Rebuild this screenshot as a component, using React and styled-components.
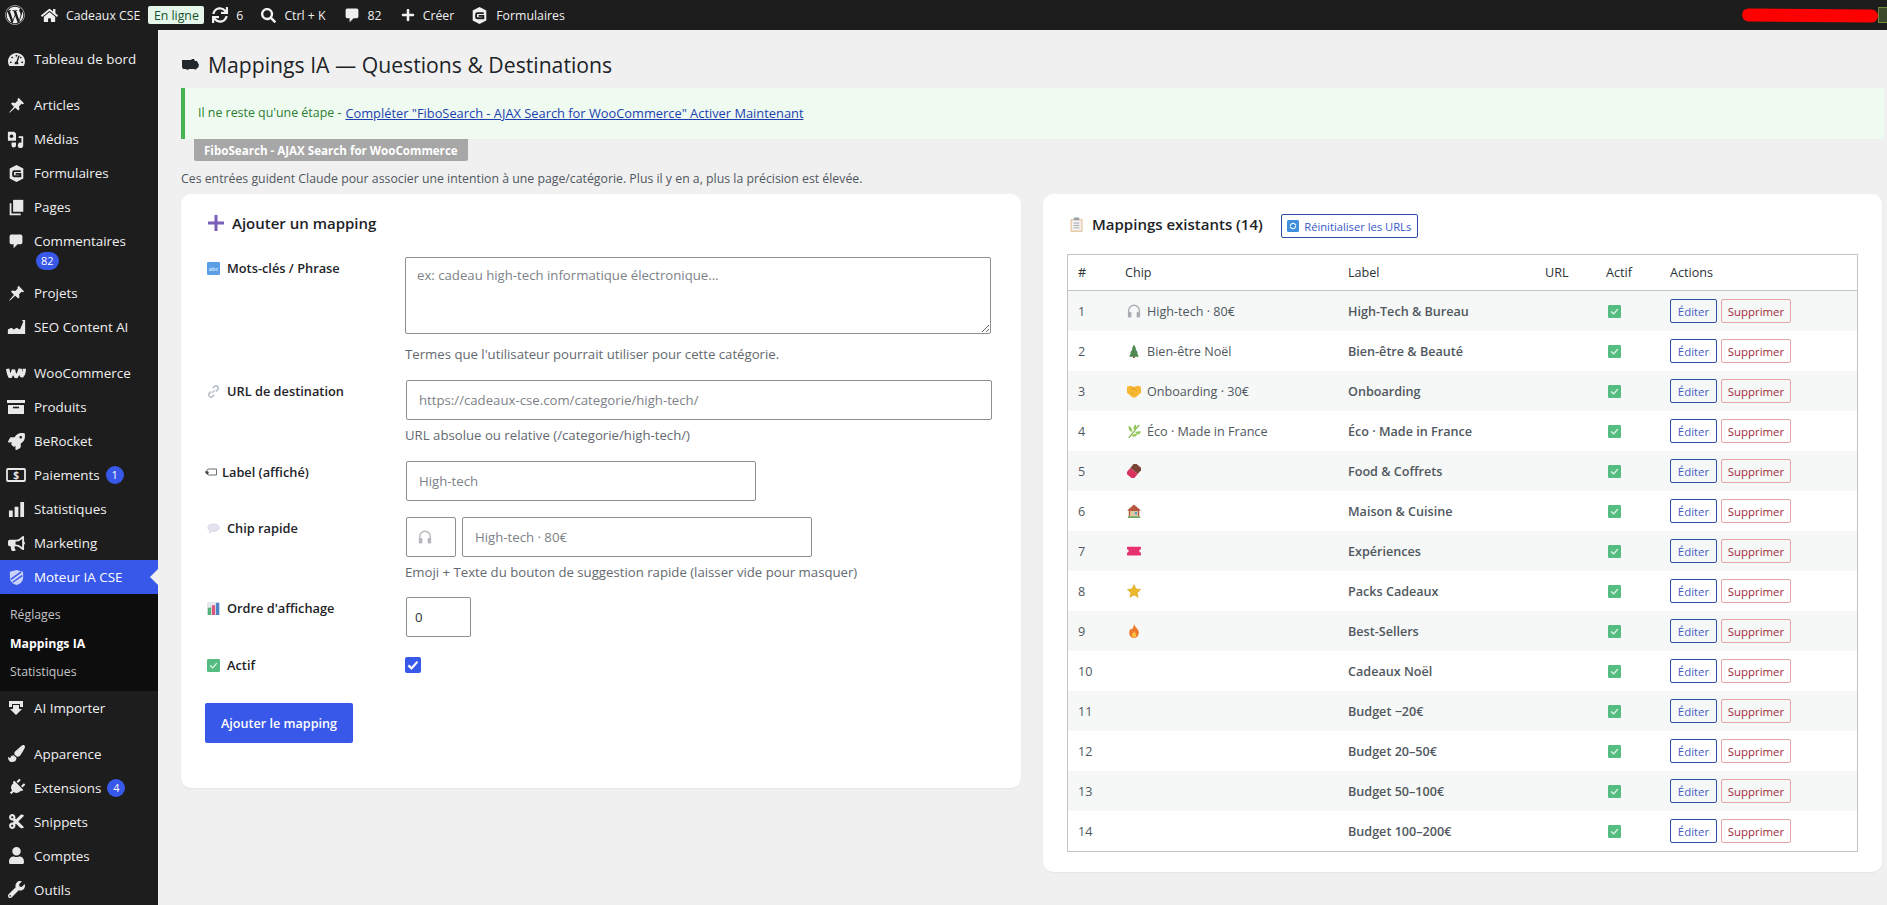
import React from "react";
import styled, { createGlobalStyle } from "styled-components";
import {
  FaWordpress, FaHome, FaSync, FaSearch, FaPlus, FaTachometerAlt, FaRocket,
  FaBullhorn, FaPaintBrush, FaPlug, FaCut, FaUser, FaWrench,
} from "react-icons/fa";

const Global = createGlobalStyle`
  html, body { margin: 0; padding: 0; height: 905px; overflow: hidden; background: #f0f0f0; }
  body { font-family: "Open Sans", "Noto Sans", "Liberation Sans", sans-serif; font-size: 13px; color: #3c434a; }
  * { box-sizing: border-box; }
`;

const AdminBar = styled.header`
  display: flex; align-items: center; height: 30px; background: #1d1d1d; color: #f0f0f1;
  font-size: 12.3px; padding-left: 5px;
`;
const BarItem = styled.div`
  display: flex; align-items: center; gap: ${p => p.$gap ?? 8}px; margin-left: ${p => p.$ml ?? 18}px; white-space: nowrap;
`;
const LogoItem = styled(BarItem)`font-size: 20px;`;
const OnlineBadge = styled.span`
  display: inline-flex; align-items: center; justify-content: center; height: 18px; width: 56px;
  background: #e6f6ea; color: #14532d; border-radius: 2px; font-size: 12.3px;
`;
const Redaction = styled.div`
  margin-left: auto; width: 136px; height: 13px; background: #ff0000; border-radius: 7px; transform: rotate(.5deg);
`;
const Corner = styled.div`
  width: 9px; height: 16px; background: #3c4a2c; border: 1px solid #6b8a3a; border-right: 0;
`;

const Shell = styled.div`display: flex; align-items: flex-start; height: 875px;`;
const Sidebar = styled.nav`
  width: 158px; flex: none; height: 875px; background: #1d1d1d; padding-top: 12px; color: #f0f0f1; font-size: 13.4px;
`;
const Item = styled.div`
  position: relative; display: flex; align-items: flex-start; min-height: 34px; padding: 8px 0 ${p => p.$stack ? 6 : 0}px;
  margin-top: ${p => p.$sep ? 12 : 0}px;
  background: ${p => p.$active ? "#3858e9" : "transparent"};
  color: ${p => p.$active ? "#fff" : "#f0f0f1"};
`;
const IconSlot = styled.span`
  width: 34px; flex: none; height: 18px; display: flex; align-items: center; justify-content: center; padding-right: 2px; color: #e8e8e8;
  font-size: 17px;
`;
const ItemBody = styled.div`
  display: flex; flex-direction: ${p => p.$stack ? "column" : "row"}; align-items: ${p => p.$stack ? "flex-start" : "center"}; gap: ${p => p.$stack ? 2 : 6}px; line-height: 18px;
`;
const Count = styled.span`
  display: inline-flex; align-items: center; justify-content: center; height: 18px; min-width: 18px; padding: 0 5px;
  background: #3858e9; color: #fff; border-radius: 9px; font-size: 11px; margin-left: ${p => p.$ml ?? 0}px;
`;
const Arrow = styled.span`
  position: absolute; right: 0; top: 9px; width: 0; height: 0;
  border: 8px solid transparent; border-right-color: #f0f0f0; border-left: 0;
`;
const Submenu = styled.div`
  background: #0d0d0d; padding: 12px 0 9px 10px; display: flex; flex-direction: column; gap: 10px; font-size: 12.3px; line-height: 18.5px; color: #c3c4c7;
`;
const SubLink = styled.div`
  font-weight: ${p => p.$on ? 700 : 400}; color: ${p => p.$on ? "#fff" : "#c3c4c7"};
`;

const Main = styled.main`flex: 1; min-width: 0; padding: 21px 5px 0 23px;`;
const Title = styled.h1`
  display: flex; align-items: center; gap: 8px; margin: 0; height: 26px; font-size: 21.2px; font-weight: 400; color: #1d2327; white-space: nowrap;
`;
const Notice = styled.div`
  margin: 11px -2px 0 0; height: 51px; display: flex; align-items: center; padding: 0 0 2px 13px;
  border-left: 4px solid #46b450; background: #effbf1; color: #2e7d32; font-size: 12.4px;
`;
const NoticeLink = styled.a`color: #1c3fb0; text-decoration: underline; margin-left: 4px; font-size: 12.85px;`;
const PluginTag = styled.div`
  display: inline-flex; align-items: center; height: 22px; width: 274px; margin-left: 13px; padding-left: 10px;
  background: #a7a7a7; color: #fff; font-weight: 700; font-size: 11.6px; border-radius: 0 0 2px 2px;
`;
const Intro = styled.p`margin: 9px 0 6px; line-height: 18px; font-size: 12.3px; color: #50575e;`;
const Columns = styled.div`display: grid; grid-template-columns: 840px 839px; gap: 22px;`;
const Card = styled.section`
  background: #fff; border-radius: 10px; box-shadow: 0 1px 2px rgba(0,0,0,.05);
  padding: ${p => p.$pad};
  height: ${p => p.$h}px;
`;
const CardTitle = styled.h2`
  display: flex; align-items: center; gap: 8px; margin: 0 0 24px 3px; height: 20px; font-size: 15px; font-weight: 600; color: #1d2327;
`;
const Row = styled.div`display: grid; grid-template-columns: 200px 1fr; margin-bottom: ${p => p.$mb ?? 17}px;`;
const FieldLabel = styled.label`
  display: flex; align-items: center; gap: 7px; height: 20px; margin-top: 1px; padding-left: 2px; font-weight: 600; font-size: 12.8px; color: #1d2327;
`;
const Tight = styled.span`display: inline-flex; margin: 0 -2px;`;
const Field = styled.div`display: flex; flex-direction: column; align-items: flex-start;`;
const FieldLine = styled.div`display: flex; gap: 6px; margin-left: 1px;`;
const Area = styled.textarea`
  width: 586px; height: 77px; padding: 8px 11px; resize: both; border: 1px solid #8c8f94; border-radius: 2px; font: inherit; font-size: 13.2px; display: block;
  &::placeholder { color: #7d8288; opacity: 1; }
`;
const Input = styled.input`
  width: ${p => p.$w}px; height: 40px; padding: 0 ${p => p.$pad ?? 12}px; border: 1px solid #8c8f94; border-radius: 2px; font: inherit; font-size: 13.2px; color: #2c3338; background: #fff;
  &::placeholder { color: #7d8288; opacity: 1; }
`;
const EmojiSlot = styled.div`
  width: 50px; height: 40px; border: 1px solid #8c8f94; border-radius: 2px; display: flex; align-items: center; padding-left: 11px;
`;
const Help = styled.p`
  margin: ${p => p.$mt ?? 6}px 0 0; line-height: 18px; font-size: 13.2px; color: #646970;
`;
const Check = styled.span`
  display: flex; align-items: center; justify-content: center; width: 16px; height: 16px; margin-top: 3px; background: #3858e9; border-radius: 2px;
`;
const Primary = styled.button`
  width: 148px; height: 40px; margin-top: 11px; background: #3858e9; color: #fff; border: 0; border-radius: 2px; font: inherit; font-weight: 600; font-size: 12.6px;
`;

const TableHead = styled.div`display: flex; align-items: center; height: 24px; margin-bottom: 16px; padding-left: 2px;`;
const TableTitle = styled.h2`
  display: flex; align-items: center; gap: 8px; margin: -4px 0 0; font-size: 15px; font-weight: 600; color: #1d2327; white-space: nowrap;
`;
const ResetBtn = styled.button`
  display: flex; align-items: center; justify-content: center; gap: 5px; width: 137px; height: 24px; margin-left: 18px; padding: 0;
  background: #fff; border: 1px solid #2f4fa8; border-radius: 2px; color: #3858c9; font: inherit; font-size: 11.2px; white-space: nowrap;
`;
const Table = styled.table`
  width: 791px; table-layout: fixed; border-collapse: separate; border-spacing: 0; border: 1px solid #c3c4c7; font-size: 12.6px;
`;
const Th = styled.th`
  width: ${p => p.$w}px; height: 36px; padding: 0 10px; text-align: left; font-weight: 400; color: #2c3338; border-bottom: 1px solid #c3c4c7;
`;
const Tr = styled.tr`background: ${p => p.$odd ? "#f6f7f7" : "#fff"};`;
const Td = styled.td`
  height: 40px; padding: 0 10px; color: #50575e; font-weight: ${p => p.$b ? 600 : 400}; white-space: nowrap;
`;
const ChipCell = styled.span`display: flex; align-items: center; gap: 6px; padding-left: 2px;`;
const ActionRow = styled.div`display: flex; gap: 4px;`;
const SmallBtn = styled.button`
  height: 24px; width: ${p => p.$w}px; padding: 0; background: #fff0; border: 1px solid ${p => p.$danger ? "#e8a5a5" : "#2f4fa8"}; border-radius: 2px;
  color: ${p => p.$danger ? "#a32b3a" : "#3f5cc0"}; font: inherit; font-size: 11.4px;
`;
const ActiveMark = styled.span`display: flex; padding-left: 2px;`;

/* small drawings */
const S = ({ size = 14, w, h, children, vb = "0 0 16 16" }) => (
  <svg width={w ?? size} height={h ?? size} viewBox={vb} fill="none" aria-hidden="true">{children}</svg>
);
const Bubble = () => <S size={16} vb="0 0 20 20"><path fill="currentColor" d="M4 2h12a2 2 0 0 1 2 2v8a2 2 0 0 1-2 2h-4l-5 5v-5H4a2 2 0 0 1-2-2V4a2 2 0 0 1 2-2z" /></S>;
const FormHex = () => <S size={17} vb="0 0 20 20"><path fill="currentColor" d="M10 0l8 4.200v11.600L10 20l-8-4.200V4.200z" /><path stroke="#1d1d1d" strokeWidth="2.200" d="M15 7.200H7.500Q6 7.200 6 9v3q0 1.200 1.500 1.200h7V10.400H9" /></S>;
const Media = () => <S size={18} vb="0 0 20 20"><path fill="currentColor" d="M1 2h7l2 2v8H1z" /><circle cx="5" cy="7" r="2" fill="#1d1d1d" /><path fill="currentColor" d="M13 7h5v10a3 3 0 1 1-2-2.700V9h-3zM5 14h5v3a2.500 2.500 0 1 1-5 0z" /></S>;
const Pages = () => <S size={17} vb="0 0 20 20"><path fill="currentColor" d="M6 1h12v14H6z" /><path stroke="currentColor" strokeWidth="2" d="M3 5v13h12" /></S>;
const Seo = () => <S w={19} h={16} vb="0 0 22 18"><path fill="currentColor" d="M1 17v-5l4-2 3 2 3-2 4 2 3-7 1-3 2 0v15zM17 1h4v4z" /></S>;
const Woo = () => <S w={20} h={12} vb="0 0 24 14"><path stroke="currentColor" strokeWidth="4" strokeLinejoin="bevel" d="M2 2q1 7 3 10 3-5 4-9 1 6 3 9 4-5 5-10 0 6 2 9 3-3 3-9" /></S>;
const Box = () => <S w={18} h={16} vb="0 0 18 16"><path fill="currentColor" d="M0 1h18v3H0zM1 6h16v9H1z" /><path stroke="#1d1d1d" strokeWidth="1.600" d="M6 8.500h6" /></S>;
const Dollar = () => <S w={20} h={14} vb="0 0 20 14"><rect x="1" y="1" width="18" height="12" rx="1" stroke="currentColor" strokeWidth="1.800" /><text x="10" y="11" textAnchor="middle" fontSize="10" fontWeight="700" fontFamily="Open Sans, sans-serif" fill="currentColor">$</text></S>;
const Bars = () => <S size={17} vb="0 0 18 18"><path fill="currentColor" d="M1 10h4v7H1zM7 6h4v11H7zM13 1h4v16h-4z" /></S>;
const Shield = () => <S size={17} vb="0 0 18 18"><path fill="#c9d2fb" d="M9 1l7 2v6c0 4-3 7-7 8-4-1-7-4-7-8V3z" /><path stroke="#3858e9" strokeWidth="1.500" d="M14 3L3 11M15 7L5 14" /></S>;
const Importer = () => <S size={16} vb="0 0 16 16"><path fill="currentColor" d="M1 1h14v6h-3V4H4v3H1zM5 5h6v4h3l-6 6-6-6h3z" /></S>;
const Pin = () => <S size={17} vb="0 0 20 20"><path fill="currentColor" d="M12.500 1l6.500 6.500-2 1-1-.5-3 3 .5 3.500-1.500 1.500-3.500-3.500L2 18.500 1.500 18l5.500-6.500L3.500 8l1.500-1.500 3.500.5 3-3-.5-1z" /></S>;
const Abc = () => <S size={13}><rect width="16" height="16" rx="1.500" fill="#5a9fe6" /><text x="8" y="10.500" textAnchor="middle" fontSize="7" fill="#dcecff" fontFamily="Open Sans, sans-serif">abc</text></S>;
const LinkE = () => <S size={13}><path stroke="#bcc3ca" strokeWidth="2" d="M6.500 9.500l3-3M5 8l-2 2a2.800 2.800 0 0 0 4 4l2-2M11 8l2-2a2.800 2.800 0 0 0-4-4L7 4" /></S>;
const TagE = () => <S w={12} h={8} vb="0 0 14 9"><path fill="#fff" stroke="#555" d="M3.500 1H13.500V8H3.500L.5 4.500z" /><circle cx="2.500" cy="5" r="1.800" fill="#444" /></S>;
const BubbleE = () => <S size={13}><path fill="#e6e2ee" stroke="#cfcadb" strokeWidth=".8" d="M8 2.500c4 0 7 1.700 7 4.500s-3 4.500-7 4.500c-.8 0-1.500 0-2.200-.2L3 13.500l.6-3C2 9.600 1 8.400 1 7c0-2.800 3-4.500 7-4.500z" /></S>;
const ChartE = () => <S size={13}><rect width="16" height="16" rx="1" fill="#e4e8ec" /><path fill="#54b07a" d="M1 7h4v9H1z" /><path fill="#d9557c" d="M6 4h4v12H6z" /><path fill="#4d84c8" d="M11 1h4v15h-4z" /></S>;
const CheckE = () => <S size={13}><rect width="16" height="16" rx="1.500" fill="#56bd82" /><path stroke="#e6f8ee" strokeWidth="1.500" d="M4 8l3 3 5-6" /></S>;
const Phones = ({ c = "#a9adb2" }) => <S><path stroke={c} strokeWidth="1.600" d="M2 10V7.500a6 6 0 0 1 12 0V10" /><rect x="1" y="9" width="4" height="6.500" rx="1.500" fill={c} /><rect x="11" y="9" width="4" height="6.500" rx="1.500" fill={c} /></S>;
const Tree = () => <S><path fill="#4f8a52" d="M8 .5l2.500 5H9.500L12.500 10h-1l2 4.500h-11l2-4.500h-1l3-4.500h-1z" /><rect x="7" y="14" width="2" height="2" fill="#7a5a3a" /></S>;
const Shake = () => <S><path fill="#f7b733" d="M0 3l4-1 4 1.500L12 2l4 1v7l-6 5q-2 1-4 0L0 10z" /><path stroke="#d18a14" strokeWidth=".8" d="M5 6l3-1 3 3M6 10l2 2" /></S>;
const Herb = () => <S><path stroke="#7fb34a" strokeWidth="1.400" d="M2 16C6 11 9 7 14 1" /><path fill="#93c75a" d="M5 9Q1 7 2 2q4 2 4 6zM9 8q3-3 1-7.500-4 2-2 6zM9 9q4-1 7-.5-1 4-5 3zM6 12q4-1 6 0-3 4-6 2z" /></S>;
const Choco = () => <S><g transform="rotate(40 8 8)"><rect x="2.500" y="0" width="11" height="8" fill="#7a4434" /><rect x="2.500" y="8" width="11" height="8" fill="#d9345f" /></g></S>;
const House = () => <S><path fill="#b5573f" d="M8 .5l8 7h-2V14H2V7.500H0z" /><rect x="3.500" y="8" width="9" height="6" fill="#e3c79d" /><rect x="9" y="9" width="2.500" height="3" fill="#58a3d6" /><rect x="1" y="14" width="14" height="2" fill="#68a860" /></S>;
const Ticket = () => <S><path fill="#e8326f" d="M1 3h14a1 1 0 0 1 1 1v2a2 2 0 0 0 0 4v2a1 1 0 0 1-1 1H1a1 1 0 0 1-1-1v-2a2 2 0 0 0 0-4V4a1 1 0 0 1 1-1z" /></S>;
const Star = () => <S><path fill="#eab72e" stroke="#d8a020" strokeWidth=".5" d="M8 .5l2.300 5 5.400.7-3.900 3.700 1 5.400L8 12.700l-4.800 2.600 1-5.400L.3 6.200l5.400-.7z" /></S>;
const Fire = () => <S><path fill="#ee7a2c" d="M8 0c.5 3 5.500 5.500 5.500 10a5.500 6 0 0 1-11 0c0-2 1-3 1.500-4.500C5.500 7 7 6 8 0z" /><path fill="#fbc243" d="M8 8c.5 1.500 2.500 2.500 2.500 4.500a2.500 3 0 0 1-5 0C5.500 11 7.500 10 8 8z" /></S>;
const Clip = () => <S size={15}><rect x="1.500" y="2" width="13" height="14" rx="1" fill="#e6c9a8" /><rect x="3" y="3.500" width="10" height="11" fill="#f4f1ee" /><rect x="5" y=".5" width="6" height="3" rx="1" fill="#9aa3ad" /><path stroke="#99a0b0" strokeWidth=".9" d="M5 6.500h6M5 9h6M5 11.500h6" /></S>;
const Reset = () => <S size={12}><rect width="16" height="16" rx="2" fill="#3f8fdc" /><path stroke="#fff" strokeWidth="1.500" d="M4.500 8a3.500 3.500 0 0 1 6-2.500L12 7M11.500 8a3.500 3.500 0 0 1-6 2.500L4 9" /></S>;
const Blob = () => <S w={19} h={14} vb="0 0 19 14"><path fill="#23282d" d="M1 3h9l1-1h2l1 2h2l2 4-1 3h-1a2 2 0 0 1-3 1H8a2 2 0 0 1-3 0H2L1 10z" /></S>;
const PlusE = () => <S size={16}><path fill="#7a5fb8" d="M6.500 0h3v6.500H16v3H9.500V16h-3V9.500H0v-3h6.500z" /></S>;

const Tilted = styled.span`display: inline-flex; transform: rotate(45deg);`;

const navTop = [
  { l: "Tableau de bord", i: <FaTachometerAlt /> },
  { l: "Articles", i: <Pin />, sep: true },
  { l: "Médias", i: <Media /> },
  { l: "Formulaires", i: <FormHex /> },
  { l: "Pages", i: <Pages /> },
  { l: "Commentaires", i: <Bubble />, stack: 82 },
  { l: "Projets", i: <Pin /> },
  { l: "SEO Content AI", i: <Seo /> },
  { l: "WooCommerce", i: <Woo />, sep: true },
  { l: "Produits", i: <Box /> },
  { l: "BeRocket", i: <FaRocket /> },
  { l: "Paiements", i: <Dollar />, count: 1 },
  { l: "Statistiques", i: <Bars /> },
  { l: "Marketing", i: <FaBullhorn /> },
];
const navBottom = [
  { l: "AI Importer", i: <Importer /> },
  { l: "Apparence", i: <FaPaintBrush />, sep: true },
  { l: "Extensions", i: <Tilted><FaPlug /></Tilted>, count: 4 },
  { l: "Snippets", i: <FaCut /> },
  { l: "Comptes", i: <FaUser /> },
  { l: "Outils", i: <FaWrench /> },
];
const rows = [
  ["High-Tech & Bureau", <Phones />, "High-tech · 80€"],
  ["Bien-être & Beauté", <Tree />, "Bien-être Noël"],
  ["Onboarding", <Shake />, "Onboarding · 30€"],
  ["Éco · Made in France", <Herb />, "Éco · Made in France"],
  ["Food & Coffrets", <Choco />, ""],
  ["Maison & Cuisine", <House />, ""],
  ["Expériences", <Ticket />, ""],
  ["Packs Cadeaux", <Star />, ""],
  ["Best-Sellers", <Fire />, ""],
  ["Cadeaux Noël"],
  ["Budget −20€"],
  ["Budget 20–50€"],
  ["Budget 50–100€"],
  ["Budget 100–200€"],
];

const NavItem = ({ n }) => (
  <Item $sep={n.sep} $stack={!!n.stack}>
    <IconSlot>{n.i}</IconSlot>
    <ItemBody $stack={!!n.stack}>
      <span>{n.l}</span>
      {n.stack && <Count $ml={2}>{n.stack}</Count>}
      {n.count && <Count>{n.count}</Count>}
    </ItemBody>
  </Item>
);

export default function App() {
  return (
    <>
      <Global />
      <AdminBar>
        <LogoItem $ml={0}><FaWordpress /></LogoItem>
        <BarItem $ml={16} $gap={8}><FaHome size={17} /><span>Cadeaux CSE</span></BarItem>
        <BarItem $ml={8}><OnlineBadge>En ligne</OnlineBadge></BarItem>
        <BarItem $ml={8}><FaSync size={16} /><span>6</span></BarItem>
        <BarItem $ml={18}><FaSearch size={15} /><span>Ctrl + K</span></BarItem>
        <BarItem $ml={18}><Bubble /><span>82</span></BarItem>
        <BarItem $ml={19}><FaPlus size={14} /><span>Créer</span></BarItem>
        <BarItem $ml={17}><FormHex /><span>Formulaires</span></BarItem>
        <Redaction />
        <Corner />
      </AdminBar>
      <Shell>
        <Sidebar>
          {navTop.map(n => <NavItem key={n.l} n={n} />)}
          <Item $active>
            <IconSlot><Shield /></IconSlot>
            <ItemBody>Moteur IA CSE</ItemBody>
            <Arrow />
          </Item>
          <Submenu>
            <SubLink>Réglages</SubLink>
            <SubLink $on>Mappings IA</SubLink>
            <SubLink>Statistiques</SubLink>
          </Submenu>
          {navBottom.map(n => <NavItem key={n.l} n={n} />)}
        </Sidebar>
        <Main>
          <Title><Blob />Mappings IA — Questions &amp; Destinations</Title>
          <Notice>
            Il ne reste qu'une étape -
            <NoticeLink>Compléter "FiboSearch - AJAX Search for WooCommerce" Activer Maintenant</NoticeLink>
          </Notice>
          <PluginTag>FiboSearch - AJAX Search for WooCommerce</PluginTag>
          <Intro>Ces entrées guident Claude pour associer une intention à une page/catégorie. Plus il y en a, plus la précision est élevée.</Intro>
          <Columns>
            <Card $pad="19px 24px 0" $h={594}>
              <CardTitle><PlusE />Ajouter un mapping</CardTitle>
              <Row>
                <FieldLabel><Abc />Mots-clés / Phrase</FieldLabel>
                <Field>
                  <Area placeholder="ex: cadeau high-tech informatique électronique..." />
                  <Help $mt={11}>Termes que l'utilisateur pourrait utiliser pour cette catégorie.</Help>
                </Field>
              </Row>
              <Row>
                <FieldLabel><LinkE />URL de destination</FieldLabel>
                <Field>
                  <FieldLine><Input $w={586} placeholder="https://cadeaux-cse.com/categorie/high-tech/" /></FieldLine>
                  <Help>URL absolue ou relative (/categorie/high-tech/)</Help>
                </Field>
              </Row>
              <Row $mb={16}>
                <FieldLabel><Tight><TagE /></Tight>Label (affiché)</FieldLabel>
                <Field><FieldLine><Input $w={350} placeholder="High-tech" /></FieldLine></Field>
              </Row>
              <Row $mb={16}>
                <FieldLabel><BubbleE />Chip rapide</FieldLabel>
                <Field>
                  <FieldLine>
                    <EmojiSlot><Phones c="#b4b8bc" /></EmojiSlot>
                    <Input $w={350} placeholder="High-tech · 80€" />
                  </FieldLine>
                  <Help>Emoji + Texte du bouton de suggestion rapide (laisser vide pour masquer)</Help>
                </Field>
              </Row>
              <Row>
                <FieldLabel><ChartE />Ordre d'affichage</FieldLabel>
                <Field><FieldLine><Input $w={65} $pad={8} defaultValue="0" /></FieldLine></Field>
              </Row>
              <Row $mb={17}>
                <FieldLabel><CheckE />Actif</FieldLabel>
                <Field>
                  <Check><S size={12}><path stroke="#fff" strokeWidth="3" d="M2 8.500l4 4L14 3.500" /></S></Check>
                </Field>
              </Row>
              <Primary>Ajouter le mapping</Primary>
            </Card>
            <Card $pad="20px 24px 0" $h={678}>
              <TableHead>
                <TableTitle><Clip />Mappings existants (14)</TableTitle>
                <ResetBtn><Reset />Réinitialiser les URLs</ResetBtn>
              </TableHead>
              <Table>
                <thead>
                  <tr>
                    <Th $w={47}>#</Th><Th $w={223}>Chip</Th><Th $w={197}>Label</Th>
                    <Th $w={61}>URL</Th><Th $w={64}>Actif</Th><Th>Actions</Th>
                  </tr>
                </thead>
                <tbody>
                  {rows.map((r, i) => (
                    <Tr key={r[0]} $odd={i % 2 === 0}>
                      <Td>{i + 1}</Td>
                      <Td><ChipCell>{r[1]}{r[2] && <span>{r[2]}</span>}</ChipCell></Td>
                      <Td $b>{r[0]}</Td>
                      <Td />
                      <Td><ActiveMark><CheckE /></ActiveMark></Td>
                      <Td>
                        <ActionRow>
                          <SmallBtn $w={47}>Éditer</SmallBtn>
                          <SmallBtn $w={70} $danger>Supprimer</SmallBtn>
                        </ActionRow>
                      </Td>
                    </Tr>
                  ))}
                </tbody>
              </Table>
            </Card>
          </Columns>
        </Main>
      </Shell>
    </>
  );
}
